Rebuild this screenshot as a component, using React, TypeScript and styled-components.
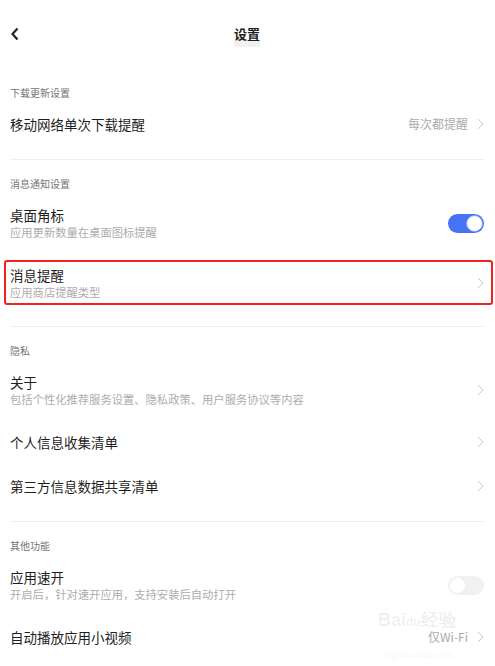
import styled, {createGlobalStyle} from "styled-components";

interface Row {
    title: string;
    sub?: string;
    value?: string;
    toggle?: boolean;
    arrow?: boolean;
    marked?: boolean;
}

interface Section {
    header: string;
    rows: Row[];
}

const sections: Section[] = [
    {
        header: '下载更新设置',
        rows: [{title: '移动网络单次下载提醒', value: '每次都提醒', arrow: true}],
    },
    {
        header: '消息通知设置',
        rows: [
            {title: '桌面角标', sub: '应用更新数量在桌面图标提醒', toggle: true},
            {title: '消息提醒', sub: '应用商店提醒类型', arrow: true, marked: true},
        ],
    },
    {
        header: '隐私',
        rows: [
            {title: '关于', sub: '包括个性化推荐服务设置、隐私政策、用户服务协议等内容', arrow: true},
            {title: '个人信息收集清单', arrow: true},
            {title: '第三方信息数据共享清单', arrow: true},
        ],
    },
    {
        header: '其他功能',
        rows: [
            {title: '应用速开', sub: '开启后，针对速开应用，支持安装后自动打开', toggle: false},
            {title: '自动播放应用小视频', value: '仅Wi-Fi', arrow: true},
        ],
    },
];

export default function App() {
    return <>
        <GlobalStyle/>
        <Page>
            <NavBar>
                <BackButton>
                    <svg width="10" height="14" viewBox="0 0 10 14">
                        <path d="M7.5 1.5 L2.5 7 L7.5 12.5" fill="none" stroke="#222" strokeWidth="2.2"/>
                    </svg>
                </BackButton>
                <Title>设置</Title>
            </NavBar>
            {sections.map(s => (
                <Group key={s.header}>
                    <GroupHeader>{s.header}</GroupHeader>
                    {s.rows.map(r => (
                        <Item key={r.title} $tall={!!r.sub} $marked={!!r.marked}>
                            <ItemText>
                                <ItemTitle>{r.title}</ItemTitle>
                                {r.sub && <ItemSub>{r.sub}</ItemSub>}
                            </ItemText>
                            <ItemEnd>
                                {r.value && <ItemValue>{r.value}</ItemValue>}
                                {r.toggle !== undefined && <Switch $on={r.toggle}><Knob $on={r.toggle}/></Switch>}
                                {r.arrow && <Chevron/>}
                            </ItemEnd>
                        </Item>
                    ))}
                </Group>
            ))}
            <Watermark>
                <WatermarkLogo>Bai<span>du</span>经验</WatermarkLogo>
                <WatermarkUrl>jingyan.baidu.com</WatermarkUrl>
            </Watermark>
        </Page>
    </>
}

function Chevron() {
    return <svg width="7" height="12" viewBox="0 0 7 12" style={{marginLeft: 9}}>
        <path d="M1 1 L6 6 L1 11" fill="none" stroke="#c8c8c8" strokeWidth="1"/>
    </svg>
}

const GlobalStyle = createGlobalStyle`
    * {
        box-sizing: border-box;
        margin: 0;
        padding: 0;
    }

    body {
        background: #fff;
        font-family: "Noto Sans CJK SC", "Noto Sans", sans-serif;
        color: #1e1e1e;
    }
`

const Page = styled.div`
    position: relative;
    width: 495px;
    height: 666px;
    overflow: hidden;
    padding: 0 11px 0 10px;
    background: #fff;
`

const NavBar = styled.header`
    height: 69px;
    display: flex;
    align-items: center;
    justify-content: center;
    position: relative;
`

const BackButton = styled.div`
    position: absolute;
    left: 0;
    top: 27px;
    display: flex;
`

const Title = styled.h1`
    font-size: 13px;
    font-weight: 700;
    line-height: 18px;
    padding-bottom: 4px;
    margin-top: 3px;
    background: linear-gradient(to bottom, transparent 70%, #f1f1f1 70%);
`

const Group = styled.section`
    padding: 15px 0 13px;
    border-bottom: 1px solid #efefef;

    &:last-of-type {
        border-bottom: none;
    }
`

const GroupHeader = styled.h2`
    height: 18px;
    line-height: 18px;
    font-size: 10px;
    font-weight: 400;
    color: #757575;
`

const Item = styled.div<{ $tall: boolean; $marked: boolean }>`
    position: relative;
    height: ${p => p.$tall ? 60 : 44}px;
    display: flex;
    align-items: center;
    justify-content: space-between;

    ${p => p.$marked && `
        &::after {
            content: '';
            position: absolute;
            left: -6px;
            right: -9px;
            top: 7px;
            bottom: 8px;
            border: 2px solid #f2231b;
            border-radius: 3px;
        }
    `}
`

const ItemText = styled.div`
    display: flex;
    flex-direction: column;
`

const ItemTitle = styled.p`
    font-size: 13.5px;
    line-height: 18px;
    color: #1e1e1e;
`

const ItemSub = styled.p`
    font-size: 11.3px;
    line-height: 16px;
    color: #adadad;
`

const ItemEnd = styled.div`
    display: flex;
    align-items: center;
`

const ItemValue = styled.span`
    font-size: 12px;
    line-height: 14px;
    color: #ababab;
`

const Switch = styled.div<{ $on: boolean }>`
    width: 36px;
    height: 19px;
    border-radius: 10px;
    padding: 1px;
    display: flex;
    justify-content: ${p => p.$on ? 'flex-end' : 'flex-start'};
    background: ${p => p.$on ? '#4672f5' : '#f1f1f1'};
`

const Knob = styled.div<{ $on: boolean }>`
    width: 17px;
    height: 17px;
    border-radius: 50%;
    background: #fff;
    border: 1px solid ${p => p.$on ? '#7d9bf7' : '#f1f1f1'};
`

const Watermark = styled.div`
    position: absolute;
    left: 378px;
    top: 611px;
    display: flex;
    flex-direction: column;
    align-items: center;
    gap: 18px;
    pointer-events: none;
    color: rgba(0, 0, 0, 0.07);
    font-family: "Liberation Sans", sans-serif;
`

const WatermarkLogo = styled.div`
    font-size: 18px;
    font-weight: 700;
    line-height: 19px;

    span {
        font-size: 12px;
    }
`

const WatermarkUrl = styled.div`
    font-size: 9px;
    line-height: 10px;
`
